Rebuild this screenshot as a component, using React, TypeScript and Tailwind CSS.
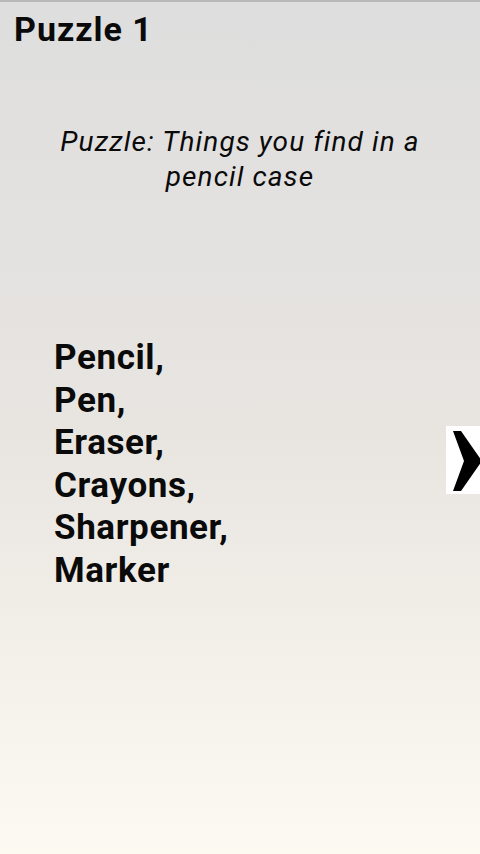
export default function App() {
  return (
    <div
      className="relative h-[854px] w-[480px] overflow-hidden bg-gradient-to-b from-[#dedede] via-[#e8e5e1] to-[#fdfaf2] text-[#0a0a0a]"
      style={{ fontFamily: "Roboto, 'Noto Sans', sans-serif" }}
    >
      <div className="h-[2px] bg-[#b8b8b8]" />
      <div className="pl-[14px] pt-[8px] text-[34px] font-bold leading-[38px] tracking-[1px]">Puzzle 1</div>
      <div className="mt-[76px] px-[30px] text-center text-[28px] italic leading-[35px] tracking-[1.1px]">
        Puzzle: Things you find in a pencil case
      </div>
      <div className="mt-[143px] pl-[54px] text-[35px] font-bold leading-[42.6px] tracking-[0.6px]">
        <div>Pencil,</div>
        <div>Pen,</div>
        <div>Eraser,</div>
        <div>Crayons,</div>
        <div>Sharpener,</div>
        <div>Marker</div>
      </div>
      <div className="absolute right-0 top-[426px] h-[68px] w-[34px] bg-white">
        <svg width="34" height="68" viewBox="0 0 34 68">
          <polygon points="7,5 15,5 36,35 15,65 7,65 18,35" fill="#000" />
        </svg>
      </div>
    </div>
  );
}
